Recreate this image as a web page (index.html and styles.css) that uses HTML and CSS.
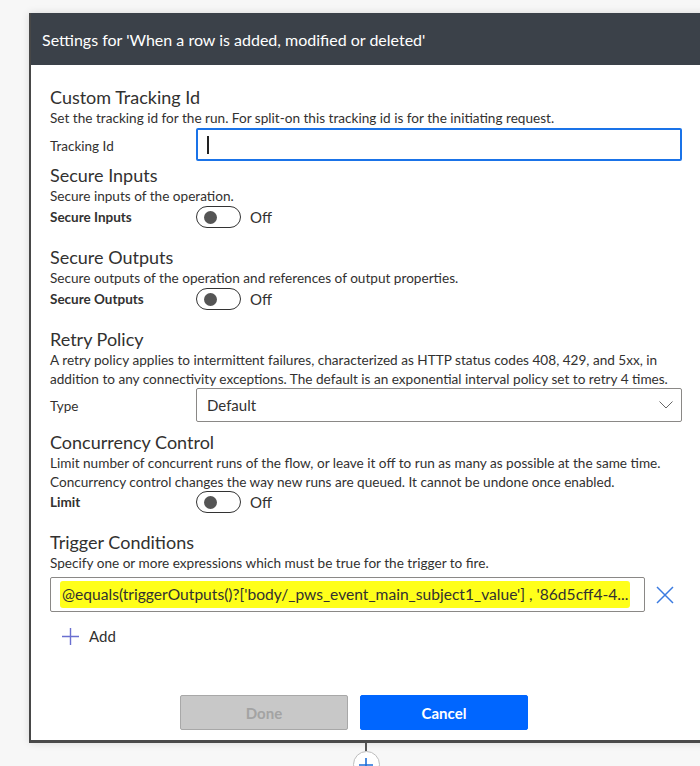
FILE: index.html
```html
<!DOCTYPE html>
<html>
<head>
<meta charset="utf-8">
<link rel="stylesheet" href="styles.css">
</head>
<body>
<div class="stage">
  <div class="dialog">
    <div class="header">Settings for 'When a row is added, modified or deleted'</div>
    <div class="content">
      <section class="sec sec-first">
        <h2 class="title">Custom Tracking Id</h2>
        <p class="desc">Set the tracking id for the run. For split-on this tracking id is for the initiating request.</p>
        <div class="row row-input">
          <span class="label">Tracking Id</span>
          <div class="textbox focused"><span class="caret"></span></div>
        </div>
      </section>
      <section class="sec sec-tight">
        <h2 class="title">Secure Inputs</h2>
        <p class="desc">Secure inputs of the operation.</p>
        <div class="row row-toggle">
          <span class="label bold">Secure Inputs</span>
          <div class="toggle-wrap"><span class="toggle"><span class="knob"></span></span><span class="state">Off</span></div>
        </div>
      </section>
      <section class="sec">
        <h2 class="title">Secure Outputs</h2>
        <p class="desc">Secure outputs of the operation and references of output properties.</p>
        <div class="row row-toggle">
          <span class="label bold">Secure Outputs</span>
          <div class="toggle-wrap"><span class="toggle"><span class="knob"></span></span><span class="state">Off</span></div>
        </div>
      </section>
      <section class="sec">
        <h2 class="title">Retry Policy</h2>
        <p class="desc">A retry policy applies to intermittent failures, characterized as HTTP status codes 408, 429, and 5xx, in addition to any connectivity exceptions. The default is an exponential interval policy set to retry 4 times.</p>
        <div class="row row-select">
          <span class="label">Type</span>
          <div class="select"><span>Default</span>
            <svg class="chev" width="14" height="8" viewBox="0 0 14 8"><path d="M0.5 0.5 L7 7 L13.5 0.5" fill="none" stroke="#666" stroke-width="1"/></svg>
          </div>
        </div>
      </section>
      <section class="sec sec-cc">
        <h2 class="title">Concurrency Control</h2>
        <p class="desc desc-tight">Limit number of concurrent runs of the flow, or leave it off to run as many as possible at the same time. Concurrency control changes the way new runs are queued. It cannot be undone once enabled.</p>
        <div class="row row-toggle">
          <span class="label bold">Limit</span>
          <div class="toggle-wrap"><span class="toggle"><span class="knob"></span></span><span class="state">Off</span></div>
        </div>
      </section>
      <section class="sec">
        <h2 class="title">Trigger Conditions</h2>
        <p class="desc">Specify one or more expressions which must be true for the trigger to fire.</p>
        <div class="cond-row">
          <div class="cond-input"><span class="hl">@equals(triggerOutputs()?['body/_pws_event_main_subject1_value'] , '86d5cff4-4...</span></div>
          <svg class="remove" width="20" height="20" viewBox="0 0 20 20"><path d="M2 2 L18 18 M18 2 L2 18" stroke="#3b7be0" stroke-width="1.5" fill="none"/></svg>
        </div>
        <div class="add">
          <svg width="17" height="17" viewBox="0 0 17 17"><path d="M8.5 0 V17 M0 8.5 H17" stroke="#6a6fd0" stroke-width="1.4" fill="none"/></svg>
          <span>Add</span>
        </div>
      </section>
      <div class="buttons">
        <button class="btn done" disabled>Done</button>
        <button class="btn cancel">Cancel</button>
      </div>
    </div>
  </div>
  <div class="connector">
    <span class="line"></span>
    <span class="plus">
      <svg width="14" height="14" viewBox="0 0 14 14"><path d="M7 0 V14 M0 7 H14" stroke="#1e6fd9" stroke-width="1.6" fill="none"/></svg>
    </span>
  </div>
</div>
</body>
</html>
```

FILE: styles.css
```css
* { box-sizing: border-box; }
html, body { margin: 0; padding: 0; }
body {
  background: #f7f7f7;
  font-family: "Lato", "Noto Sans", sans-serif;
  color: #323130;
  overflow: hidden;
  width: 700px;
  height: 766px;
}
.stage {
  padding: 13px 0 0 29px;
}
.dialog {
  width: 700px;
  background: #fff;
  border-left: 2px solid #474747;
  border-bottom: 3px solid #4a4a4a;
  box-shadow: 0 0 8px rgba(0,0,0,0.12);
}
.header {
  height: 52px;
  background: #3b4149;
  color: #fff;
  font-size: 16px;
  padding-left: 11px;
  display: flex;
  align-items: center;
}
.content {
  padding: 20px 0 0 19px;
  width: 651px;
}
.sec { margin-top: 17px; }
.sec-first { margin-top: 0; }
.sec-tight { margin-top: 2px; }
.sec-cc { margin-top: 8px; }
.title {
  margin: 0;
  font-weight: 400;
  font-size: 18px;
  line-height: 24px;
  color: #323130;
}
.desc {
  margin: 0;
  font-size: 13.6px;
  line-height: 19px;
  color: #323130;
}
.desc-tight { line-height: 18.5px; }
.row {
  display: grid;
  grid-template-columns: 146px 486px;
  align-items: center;
}
.label { font-size: 13.5px; line-height: 19px; }
.label.bold { font-weight: 700; }
.row-input { height: 33px; }
.row-input .label { margin-top: 4px; }
.textbox {
  height: 33px;
  border: 2px solid #1a73e8;
  border-radius: 2px;
  display: flex;
  align-items: center;
  padding-left: 9px;
}
.caret { width: 2px; height: 18px; background: #222; }
.row-toggle { height: 22px; }
.toggle-wrap { display: flex; align-items: center; gap: 9px; }
.toggle {
  width: 45px;
  height: 22px;
  border: 1px solid #333;
  border-radius: 11px;
  display: flex;
  align-items: center;
  padding-left: 7px;
}
.knob { width: 13px; height: 13px; border-radius: 50%; background: #555; }
.state { font-size: 15px; color: #323130; }
.row-select { height: 34px; margin-top: -1px; }
.row-select .label { margin-top: 2px; }
.select {
  height: 34px;
  border: 1px solid #8a8886;
  border-radius: 2px;
  display: flex;
  align-items: center;
  justify-content: space-between;
  padding: 0 8px 0 10px;
  font-size: 15px;
}
.cond-row {
  display: flex;
  align-items: center;
  margin-top: 4px;
  gap: 10px;
}
.cond-input {
  width: 595px;
  height: 35px;
  border: 1px solid #8a8886;
  border-radius: 2px;
  display: flex;
  align-items: center;
  padding-left: 9px;
  font-size: 15.6px;
  white-space: nowrap;
  overflow: hidden;
}
.hl { background: #ffff1a; padding: 4px 2px 5px; border-radius: 3px; }
.add {
  display: flex;
  align-items: center;
  gap: 10px;
  margin: 15px 0 0 12px;
  font-size: 15px;
  color: #323130;
}
.buttons {
  display: flex;
  gap: 12px;
  padding: 50px 0 10px 130px;
}
.btn {
  width: 168px;
  height: 35px;
  border-radius: 2px;
  font-family: inherit;
  font-size: 15px;
  font-weight: 700;
}
.done { background: #c8c8c8; border: 1px solid #a8a8a8; color: #a3a3a3; }
.cancel { background: #0066ff; border: 1px solid #0066ff; color: #fff; }
.connector {
  display: flex;
  flex-direction: column;
  align-items: center;
  width: 28px;
  margin-left: 323px;
}
.connector .line { width: 2px; height: 8px; background: #555; }
.connector .plus {
  width: 27px; height: 27px;
  border: 1px solid #bdbdbd;
  border-radius: 50%;
  background: #fff;
  display: flex; align-items: center; justify-content: center;
}
```
